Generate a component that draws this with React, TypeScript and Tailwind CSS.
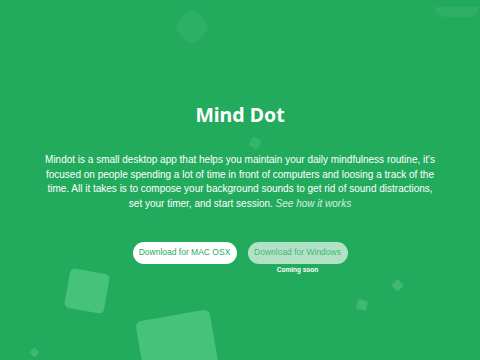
export default function App() {
  return (
    <main className="relative min-h-[360px] w-full overflow-hidden bg-[#22ab5d] text-white">
      {/* decorative shapes */}
      <div className="absolute left-[178px] top-[13px] h-[28px] w-[28px] rotate-45 rounded-[10px] bg-white/5" />
      <div className="absolute left-[435px] top-[7px] h-[10px] w-[44px] rounded-b-[22px] bg-white/5" />
      <div className="absolute left-[250px] top-[138px] h-[10px] w-[10px] rotate-[30deg] rounded-[3px] bg-white/10" />
      <div className="absolute left-[67px] top-[271px] h-[40px] w-[40px] rotate-[10deg] rounded-[5px] bg-[#47c27a]" />
      <div className="absolute left-[141px] top-[315px] h-[75px] w-[75px] rotate-[-10deg] rounded-[6px] bg-[#47c27a]" />
      <div className="absolute left-[31px] top-[349px] h-[7px] w-[7px] rotate-45 rounded-[1px] bg-white/15" />
      <div className="absolute left-[393px] top-[281px] h-[9px] w-[9px] rotate-45 rounded-[2px] bg-white/15" />
      <div className="absolute left-[357px] top-[300px] h-[10px] w-[10px] rotate-[15deg] rounded-[2px] bg-white/15" />

      <section className="relative flex flex-col items-center px-6 pt-[101px]">
        <h1 className="font-['Noto_Sans',sans-serif] text-[19.5px] font-bold leading-[28px]">
          Mind Dot
        </h1>
        <p className="mt-[24px] whitespace-nowrap text-center font-['Liberation_Sans',Arial,sans-serif] text-[10px] leading-[14.7px]">
          Mindot is a small desktop app that helps you maintain your daily mindfulness routine, it's
          <br />
          focused on people spending a lot of time in front of computers and loosing a track of the
          <br />
          time. All it takes is to compose your background sounds to get rid of sound distractions,
          <br />
          set your timer, and start session. <em className="text-white/80">See how it works</em>
        </p>

        <div className="mt-[30px] flex items-start gap-[11px] font-['Liberation_Sans',Arial,sans-serif]">
          <button className="h-[22px] w-[104px] rounded-full bg-white text-[8.5px] text-[#22ab5d]">
            Download for MAC OSX
          </button>
          <div className="flex flex-col items-center">
            <button className="h-[22px] w-[100px] rounded-full bg-white/65 text-[8.5px] text-[#22ab5d]/80">
              Download for Windows
            </button>
            <span className="mt-[1px] text-[6.5px] font-bold leading-[10px]">Coming soon</span>
          </div>
        </div>
      </section>
    </main>
  );
}
